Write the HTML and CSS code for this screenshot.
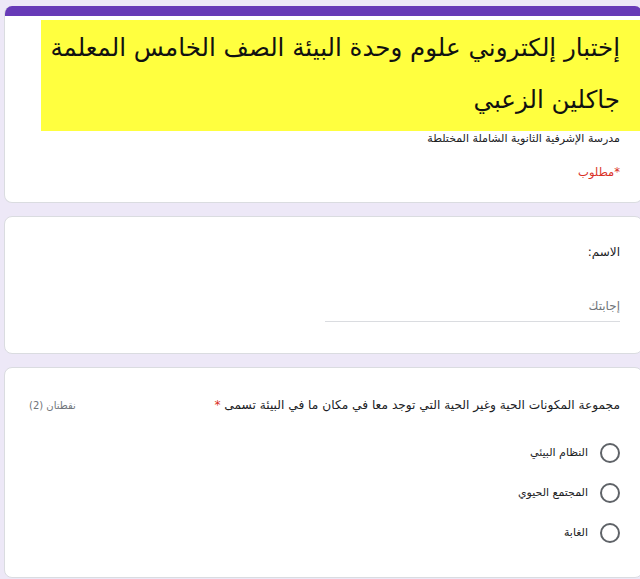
FILE: index.html
```html
<!DOCTYPE html>
<html lang="ar" dir="rtl">
<head>
  <meta charset="UTF-8">
  <meta name="viewport" content="width=device-width, initial-scale=1.0">
  <title>إختبار إلكتروني علوم</title>
  <link rel="stylesheet" href="styles.css">
</head>
<body>
  <main class="form">
    <section class="card card-head">
      <div class="top-bar"></div>
      <div class="banner">
        <h1>إختبار إلكتروني علوم وحدة البيئة الصف الخامس المعلمة<br>جاكلين الزعبي</h1>
      </div>
      <p class="school">مدرسة الإشرفية الثانوية الشاملة المختلطة</p>
      <p class="required">*مطلوب</p>
    </section>

    <section class="card">
      <p class="label">الاسم:</p>
      <div class="answer">إجابتك</div>
    </section>

    <section class="card">
      <div class="question">
        <p class="q-text">مجموعة المكونات الحية وغير الحية التي توجد معا في مكان ما في البيئة تسمى <span class="star">*</span></p>
        <span class="points">نقطتان (2)</span>
      </div>
      <ul class="options">
        <li><span class="radio"></span>النظام البيئي</li>
        <li><span class="radio"></span>المجتمع الحيوي</li>
        <li><span class="radio"></span>الغابة</li>
      </ul>
    </section>
  </main>
</body>
</html>
```

FILE: styles.css
```css
body {
  margin: 0;
  background-color: #ede8f7;
  font-family: "DejaVu Sans", Arial, sans-serif;
  color: #202124;
  overflow: hidden;
}

.form {
  width: 639px;
  margin: 6px -3px 0 4px;
  display: flex;
  flex-direction: column;
  gap: 13px;
}

.card {
  background-color: #fff;
  border: 1px solid #dadce0;
  border-radius: 8px;
  padding: 0 22px 0 0;
  overflow: hidden;
}

.card-head {
  padding: 0;
  height: 196px;
  border-top: none;
}

.top-bar {
  height: 10px;
  background-color: #673ab7;
}

.banner {
  margin: 4px 0 0 36px;
  background-color: #ffff3f;
  height: 111px;
  padding-right: 22px;
}

.banner h1 {
  margin: 0;
  padding-top: 2px;
  font-family: "DejaVu Sans", sans-serif;
  font-weight: normal;
  font-size: 24.5px;
  line-height: 52px;
  white-space: nowrap;
  color: #111;
}

.school {
  margin: 0;
  padding-right: 22px;
  font-size: 11px;
  line-height: 16px;
}

.required {
  margin: 18px 0 0;
  padding-right: 22px;
  font-size: 11.5px;
  color: #d93025;
}

.label {
  margin: 27px 0 0;
  font-size: 12px;
  line-height: 16px;
}

.answer {
  margin: 38px 0 31px;
  width: 295px;
  font-size: 12px;
  line-height: 16px;
  color: #70757a;
  padding-bottom: 7px;
  border-bottom: 1px solid #dadce0;
}

.question {
  display: flex;
  justify-content: space-between;
  align-items: center;
  margin-top: 28px;
}

.q-text {
  margin: 0;
  font-size: 12.2px;
  line-height: 18px;
}

.star {
  color: #d93025;
}

.points {
  margin-left: 24px;
  font-size: 10px;
  color: #70757a;
}

.options {
  list-style: none;
  margin: 29px 0 34px;
  padding: 0;
  display: flex;
  flex-direction: column;
  gap: 20px;
}

.options li {
  display: flex;
  align-items: center;
  gap: 12px;
  font-size: 11px;
  line-height: 20px;
}

.radio {
  width: 16px;
  height: 16px;
  border: 2px solid #5f6368;
  border-radius: 50%;
}
```
